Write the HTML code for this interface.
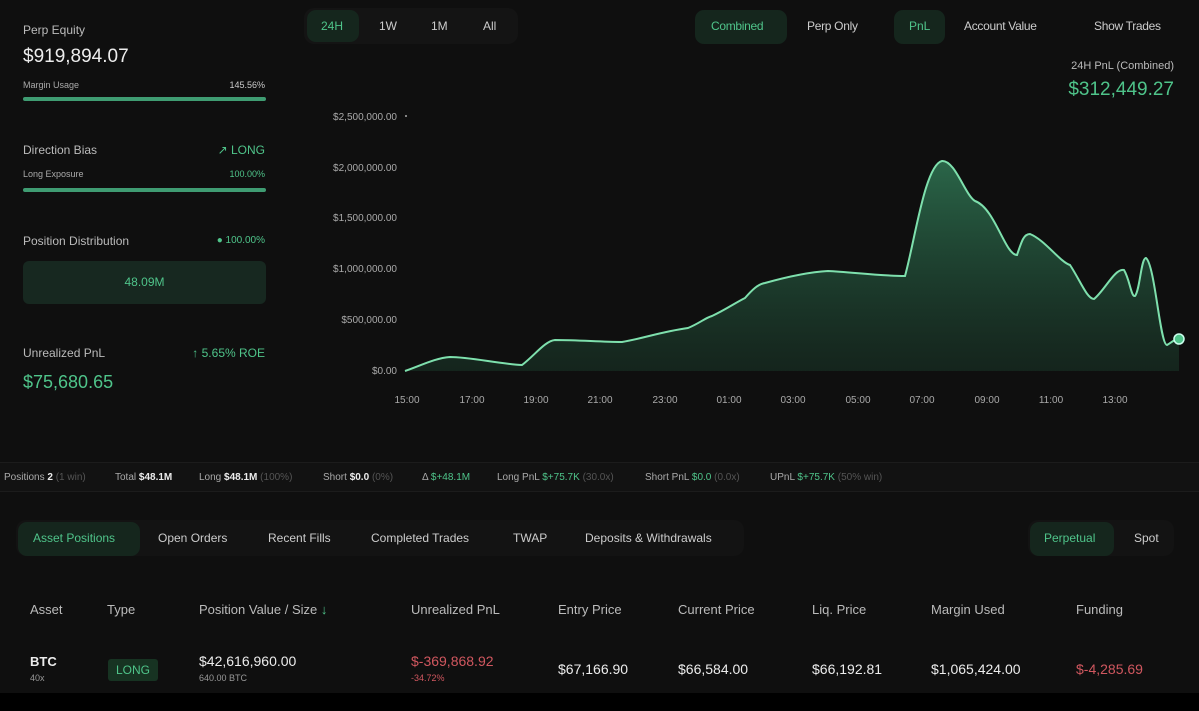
<!DOCTYPE html>
<html><head><meta charset="utf-8"><style>
*{margin:0;padding:0;box-sizing:border-box}
body{width:1199px;height:711px;background:#0f0f0f;font-family:"Liberation Sans",sans-serif;color:#d8d8d8;position:relative;overflow:hidden}
.a{position:absolute;white-space:nowrap}
.g{color:#4fc48a}.r{color:#d0575f}.m{color:#8a8a8a}.w{color:#ececec}
.pill{position:absolute;border-radius:9px;background:#15261d}
.bar{position:absolute;height:4px;border-radius:2px;background:#3f9c72}
.rt{position:absolute;right:934px;white-space:nowrap}
.s{position:absolute;top:472px;font-size:10px;color:#aaa;white-space:nowrap}
.s i{font-style:normal;color:#555}
</style></head><body>
<!-- left panel -->
<div class="a" style="left:23px;top:23px;font-size:12px;color:#bbb">Perp Equity</div>
<div class="a w" style="left:23px;top:46px;font-size:19px">$919,894.07</div>
<div class="a" style="left:23px;top:80px;font-size:9px;color:#aaa">Margin Usage</div>
<div class="rt" style="top:80px;font-size:9px;color:#ccc">145.56%</div>
<div class="bar" style="left:23px;top:97px;width:243px"></div>
<div class="a" style="left:23px;top:143px;font-size:12px;color:#bbb">Direction Bias</div>
<div class="rt g" style="top:143px;font-size:12px">↗ LONG</div>
<div class="a" style="left:23px;top:169px;font-size:9px;color:#aaa">Long Exposure</div>
<div class="rt g" style="top:169px;font-size:9px">100.00%</div>
<div class="bar" style="left:23px;top:188px;width:243px"></div>
<div class="a" style="left:23px;top:234px;font-size:12px;color:#bbb">Position Distribution</div>
<div class="rt g" style="top:235px;font-size:10px">● 100.00%</div>
<div class="a" style="left:23px;top:261px;width:243px;height:43px;background:#172820;border-radius:6px;color:#4fc48a;font-size:12px;text-align:center;line-height:43px">48.09M</div>
<div class="a" style="left:23px;top:346px;font-size:12px;color:#bbb">Unrealized PnL</div>
<div class="rt g" style="top:346px;font-size:12px">↑ 5.65% ROE</div>
<div class="a g" style="left:23px;top:372px;font-size:18px">$75,680.65</div>
<!-- time tabs -->
<div class="a" style="left:304px;top:8px;width:214px;height:36px;background:#141414;border-radius:10px"></div>
<div class="pill" style="left:307px;top:10px;width:52px;height:32px"></div>
<div class="a g" style="left:321px;top:19px;font-size:12px">24H</div>
<div class="a" style="left:379px;top:19px;font-size:12px;color:#ccc">1W</div>
<div class="a" style="left:431px;top:19px;font-size:12px;color:#ccc">1M</div>
<div class="a" style="left:483px;top:19px;font-size:12px;color:#ccc">All</div>
<!-- right tabs -->
<div class="pill" style="left:695px;top:10px;width:92px;height:34px"></div>
<div class="a g" style="left:711px;top:19px;font-size:12px;letter-spacing:-0.3px">Combined</div>
<div class="a" style="left:807px;top:19px;font-size:12px;color:#ccc;letter-spacing:-0.3px">Perp Only</div>
<div class="pill" style="left:894px;top:10px;width:51px;height:34px"></div>
<div class="a g" style="left:909px;top:19px;font-size:12px">PnL</div>
<div class="a" style="left:964px;top:19px;font-size:12px;color:#ccc;letter-spacing:-0.3px">Account Value</div>
<div class="a" style="left:1094px;top:19px;font-size:12px;color:#ccc;letter-spacing:-0.3px">Show Trades</div>
<div class="a" style="right:25px;top:60px;font-size:11px;color:#bbb">24H PnL (Combined)</div>
<div class="a g" style="right:25px;top:79px;font-size:19px">$312,449.27</div>
<!-- chart -->
<svg class="a" style="left:0;top:0" width="1199" height="440">
<defs><linearGradient id="gr" x1="0" y1="0" x2="0" y2="1"><stop offset="0" stop-color="#2f7553" stop-opacity=".85"/><stop offset="1" stop-color="#1a3a2a" stop-opacity=".5"/></linearGradient></defs>
<g font-family="Liberation Sans" font-size="10" fill="#aaa" text-anchor="end">
<text x="397" y="120">$2,500,000.00</text><text x="397" y="171">$2,000,000.00</text><text x="397" y="221">$1,500,000.00</text><text x="397" y="272">$1,000,000.00</text><text x="397" y="323">$500,000.00</text><text x="397" y="374">$0.00</text></g>
<circle cx="406" cy="116" r="1" fill="#aaa"/>
<g font-family="Liberation Sans" font-size="10" fill="#aaa" text-anchor="middle">
<text x="407" y="403">15:00</text><text x="472" y="403">17:00</text><text x="536" y="403">19:00</text><text x="600" y="403">21:00</text><text x="665" y="403">23:00</text><text x="729" y="403">01:00</text><text x="793" y="403">03:00</text><text x="858" y="403">05:00</text><text x="922" y="403">07:00</text><text x="987" y="403">09:00</text><text x="1051" y="403">11:00</text><text x="1115" y="403">13:00</text></g>
<path d="M405,371 C420,366 435,358 450,357 C470,357 500,364 522,365 C535,355 545,341 555,340 C580,340 600,342 622,342 C645,338 660,332 688,328 C700,323 705,318 712,316 C725,310 735,303 745,298 C752,290 758,284 765,283 C790,276 810,272 828,271 C850,272 880,276 905,276 C915,240 925,165 942,161 C955,160 965,195 975,201 C995,208 1005,255 1017,255 C1022,240 1024,234 1030,234 C1045,240 1060,262 1070,265 C1080,280 1087,299 1094,299 C1105,290 1115,268 1124,270 C1130,280 1131,297 1135,296 C1140,290 1141,258 1146,258 C1155,265 1160,345 1167,345 C1172,342 1175,339 1179,339 L1179,371 Z" fill="url(#gr)"/>
<path d="M405,371 C420,366 435,358 450,357 C470,357 500,364 522,365 C535,355 545,341 555,340 C580,340 600,342 622,342 C645,338 660,332 688,328 C700,323 705,318 712,316 C725,310 735,303 745,298 C752,290 758,284 765,283 C790,276 810,272 828,271 C850,272 880,276 905,276 C915,240 925,165 942,161 C955,160 965,195 975,201 C995,208 1005,255 1017,255 C1022,240 1024,234 1030,234 C1045,240 1060,262 1070,265 C1080,280 1087,299 1094,299 C1105,290 1115,268 1124,270 C1130,280 1131,297 1135,296 C1140,290 1141,258 1146,258 C1155,265 1160,345 1167,345 C1172,342 1175,339 1179,339" fill="none" stroke="#7ee0ad" stroke-width="2"/>
<circle cx="1179" cy="339" r="5" fill="#4fc48a" stroke="#cfe" stroke-width="1.5"/>
</svg>
<!-- stats bar -->
<div class="a" style="left:0;top:462px;width:1199px;height:30px;background:#121212;border-top:1px solid #1c1c1c;border-bottom:1px solid #1c1c1c"></div>
<div class="s" style="left:4px">Positions <b class="w">2</b> <i>(1 win)</i></div>
<div class="s" style="left:115px">Total <b class="w">$48.1M</b></div>
<div class="s" style="left:199px">Long <b class="w">$48.1M</b> <i>(100%)</i></div>
<div class="s" style="left:323px">Short <b class="w">$0.0</b> <i>(0%)</i></div>
<div class="s" style="left:422px">Δ <span class="g">$+48.1M</span></div>
<div class="s" style="left:497px">Long PnL <span class="g">$+75.7K</span> <i>(30.0x)</i></div>
<div class="s" style="left:645px">Short PnL <span class="g">$0.0</span> <i>(0.0x)</i></div>
<div class="s" style="left:770px">UPnL <span class="g">$+75.7K</span> <i>(50% win)</i></div>
<!-- bottom tabs -->
<div class="a" style="left:16px;top:520px;width:728px;height:36px;background:#131313;border-radius:10px"></div>
<div class="pill" style="left:18px;top:522px;width:122px;height:34px"></div>
<div class="a g" style="left:33px;top:531px;font-size:12px">Asset Positions</div>
<div class="a" style="left:158px;top:531px;font-size:12px;color:#ccc">Open Orders</div>
<div class="a" style="left:268px;top:531px;font-size:12px;color:#ccc">Recent Fills</div>
<div class="a" style="left:371px;top:531px;font-size:12px;color:#ccc">Completed Trades</div>
<div class="a" style="left:513px;top:531px;font-size:12px;color:#ccc">TWAP</div>
<div class="a" style="left:585px;top:531px;font-size:12px;color:#ccc">Deposits &amp; Withdrawals</div>
<div class="a" style="left:1028px;top:520px;width:146px;height:36px;background:#131313;border-radius:10px"></div>
<div class="pill" style="left:1030px;top:522px;width:84px;height:34px"></div>
<div class="a g" style="left:1044px;top:531px;font-size:12px">Perpetual</div>
<div class="a" style="left:1134px;top:531px;font-size:12px;color:#ccc">Spot</div>
<!-- table -->
<div class="a" style="left:0;top:602px;font-size:13px;color:#bbb">
<span class="a" style="left:30px">Asset</span><span class="a" style="left:107px">Type</span><span class="a" style="left:199px">Position Value / Size <span class="g">↓</span></span><span class="a" style="left:411px">Unrealized PnL</span><span class="a" style="left:558px">Entry Price</span><span class="a" style="left:678px">Current Price</span><span class="a" style="left:812px">Liq. Price</span><span class="a" style="left:931px">Margin Used</span><span class="a" style="left:1076px">Funding</span></div>
<div class="a w" style="left:30px;top:654px;font-size:13px;font-weight:bold">BTC</div>
<div class="a" style="left:30px;top:673px;font-size:9px;color:#999">40x</div>
<div class="a g" style="left:108px;top:659px;width:50px;height:22px;background:#173322;border-radius:3px;font-size:12px;text-align:center;line-height:22px">LONG</div>
<div class="a w" style="left:199px;top:653px;font-size:14px">$42,616,960.00</div>
<div class="a" style="left:199px;top:673px;font-size:9px;color:#999">640.00 BTC</div>
<div class="a r" style="left:411px;top:653px;font-size:14px">$-369,868.92</div>
<div class="a r" style="left:411px;top:673px;font-size:9px">-34.72%</div>
<div class="a w" style="left:558px;top:661px;font-size:14px">$67,166.90</div>
<div class="a w" style="left:678px;top:661px;font-size:14px">$66,584.00</div>
<div class="a w" style="left:812px;top:661px;font-size:14px">$66,192.81</div>
<div class="a w" style="left:931px;top:661px;font-size:14px">$1,065,424.00</div>
<div class="a r" style="left:1076px;top:661px;font-size:14px">$-4,285.69</div>
<div class="a" style="left:0;top:693px;width:1199px;height:18px;background:#000"></div>
</body></html>
